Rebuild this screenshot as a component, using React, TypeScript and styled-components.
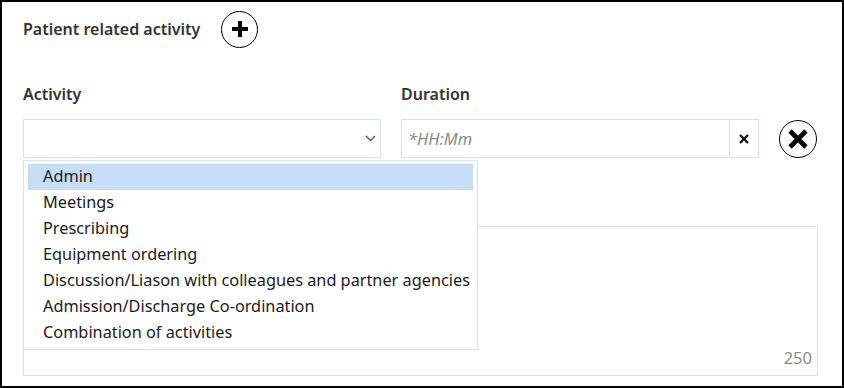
import React from "react";
import styled, { createGlobalStyle } from "styled-components";

const GlobalStyle = createGlobalStyle`
  html, body {
    margin: 0;
    padding: 0;
    background: #ffffff;
  }
  body {
    font-family: "Noto Sans", "Open Sans", Arial, sans-serif;
    color: #333333;
  }
`;

const Frame = styled.div`
  box-sizing: border-box;
  width: 844px;
  height: 388px;
  border: 2px solid #000000;
  padding: 9px 25px 0 21px;
  overflow: hidden;
`;

const Header = styled.div`
  display: flex;
  align-items: center;
  gap: 21px;
  height: 36px;
`;

const Title = styled.h2`
  margin: 0;
  font-size: 16px;
  font-weight: 600;
  color: #333333;
`;

const RoundButton = styled.button<{ $size: number }>`
  display: flex;
  align-items: center;
  justify-content: center;
  width: ${(p) => p.$size}px;
  height: ${(p) => p.$size}px;
  padding: 0;
  border: 1.5px solid #000000;
  border-radius: 50%;
  background: #ffffff;
  flex-shrink: 0;
`;

const FieldsRow = styled.div`
  display: flex;
  align-items: flex-end;
  gap: 20px;
  margin-top: 37px;
`;

const Field = styled.div`
  position: relative;
  display: flex;
  flex-direction: column;
  gap: 15px;
  width: 358px;
`;

const Label = styled.label`
  font-size: 16px;
  font-weight: 600;
  line-height: 20px;
  color: #333333;
`;

const Box = styled.div`
  box-sizing: border-box;
  display: flex;
  align-items: center;
  height: 39px;
  border: 1px solid #d5e6ec;
  background: #ffffff;
`;

const SelectValue = styled.div`
  flex: 1;
`;

const Chevron = styled.div`
  display: flex;
  align-items: center;
  justify-content: center;
  width: 20px;
`;

const Input = styled.div`
  flex: 1;
  padding-left: 6px;
  font-size: 16.5px;
  font-style: italic;
  color: #8a8a8a;
`;

const ClearButton = styled.div`
  box-sizing: border-box;
  display: flex;
  align-items: center;
  justify-content: center;
  width: 29px;
  height: 100%;
  border-left: 1px solid #d5e6ec;
`;

const Menu = styled.ul`
  position: absolute;
  top: 76px;
  left: 0;
  z-index: 2;
  box-sizing: border-box;
  width: 455px;
  margin: 0;
  padding: 3px 4px 3px 4px;
  list-style: none;
  background: #ffffff;
  border: 1px solid #d5e6ec;
`;

const MenuItem = styled.li<{ $active?: boolean }>`
  height: 26px;
  line-height: 25px;
  padding-left: 15px;
  font-size: 16.3px;
  color: #1a1a1a;
  white-space: nowrap;
  background: ${(p) => (p.$active ? "#c6ddf5" : "transparent")};
`;

const TextArea = styled.div`
  box-sizing: border-box;
  display: flex;
  align-items: flex-end;
  justify-content: flex-end;
  width: 795px;
  height: 150px;
  margin-top: 68px;
  padding: 0 5px 6px 0;
  border: 1px solid #d5e6ec;
`;

const Counter = styled.span`
  font-size: 16.5px;
  color: #8a8a8a;
`;

const activities = [
  "Admin",
  "Meetings",
  "Prescribing",
  "Equipment ordering",
  "Discussion/Liason with colleagues and partner agencies",
  "Admission/Discharge Co-ordination",
  "Combination of activities",
];

export default function App() {
  return (
    <>
      <GlobalStyle />
      <Frame>
        <Header>
          <Title>Patient related activity</Title>
          <RoundButton $size={37} aria-label="Add">
            <svg width="18" height="18" viewBox="0 0 18 18">
              <path d="M9 1v16M1 9h16" stroke="#000" strokeWidth="4" />
            </svg>
          </RoundButton>
        </Header>

        <FieldsRow>
          <Field>
            <Label>Activity</Label>
            <Box>
              <SelectValue />
              <Chevron>
                <svg width="11" height="7" viewBox="0 0 11 7">
                  <path d="M1 1l4.5 4.5L10 1" fill="none" stroke="#555" strokeWidth="1.3" />
                </svg>
              </Chevron>
            </Box>
            <Menu>
              {activities.map((a, i) => (
                <MenuItem key={a} $active={i === 0}>
                  {a}
                </MenuItem>
              ))}
            </Menu>
          </Field>
          <Field>
            <Label>Duration</Label>
            <Box>
              <Input>*HH:Mm</Input>
              <ClearButton>
                <svg width="10" height="10" viewBox="0 0 10 10">
                  <path d="M1 1l8 8M9 1l-8 8" stroke="#111" strokeWidth="2.4" />
                </svg>
              </ClearButton>
            </Box>
          </Field>
          <RoundButton $size={38} aria-label="Remove">
            <svg width="22" height="22" viewBox="0 0 22 22">
              <path d="M3 3l16 16M19 3L3 19" stroke="#000" strokeWidth="4.6" />
            </svg>
          </RoundButton>
        </FieldsRow>

        <TextArea>
          <Counter>250</Counter>
        </TextArea>
      </Frame>
    </>
  );
}
